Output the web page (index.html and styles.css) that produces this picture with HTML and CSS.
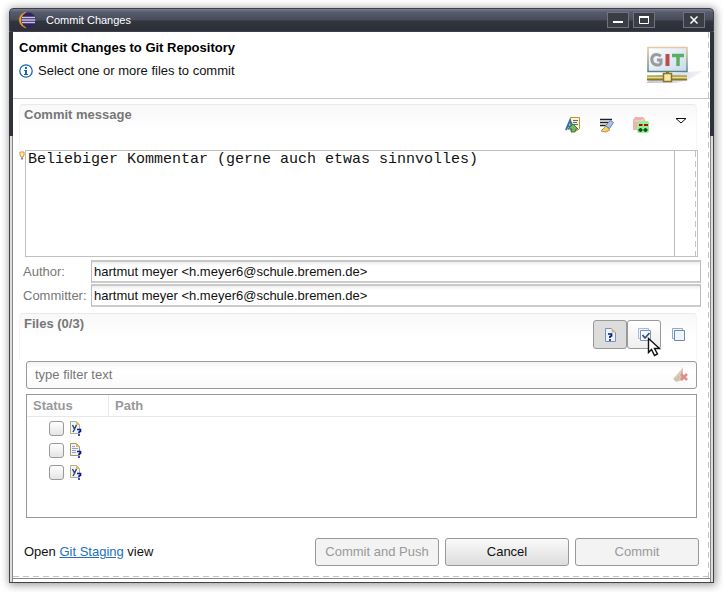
FILE: index.html
```html
<!DOCTYPE html>
<html lang="en">
<head>
<meta charset="utf-8">
<title>Commit Changes</title>
<link rel="stylesheet" href="styles.css">
</head>
<body>
<main class="window">
  <header class="titlebar">
    <svg class="logo" width="20" height="18" viewBox="0 0 20 18"><path d="M8 1C-1 4-1 14 8 17C3 12 3 6 8 1Z" fill="#f3a01f" stroke="#f3a01f" stroke-width=".5"/><circle cx="10.500" cy="9" r="7.500" fill="#2f2460"/><path d="M4 6.500h13M3.500 9h14M4 11.500h13" stroke="#c9c3e4" stroke-width="1.500"/></svg>
    <span class="caption">Commit Changes</span>
    <button class="win-btn" aria-label="Minimize"><svg width="20" height="14" viewBox="0 0 20 14"><path d="M5 9h10" stroke="#fff" stroke-width="2"/></svg></button>
    <button class="win-btn" aria-label="Maximize"><svg width="20" height="14" viewBox="0 0 20 14"><path d="M5 4h10" stroke="#fff" stroke-width="2"/><path d="M5.500 3.500h9v7h-9z" fill="none" stroke="#fff"/></svg></button>
    <button class="win-btn close" aria-label="Close"><svg width="20" height="14" viewBox="0 0 20 14"><path d="M6.500 3.500l7 7m0-7l-7 7" stroke="#fff" stroke-width="1.500"/></svg></button>
  </header>
  <div class="frame">
  <div class="content">
    <section class="intro">
      <div class="intro-text">
        <h1>Commit Changes to Git Repository</h1>
        <p class="hint"><svg width="14" height="14" viewBox="0 0 14 14"><circle cx="7" cy="7" r="6.200" fill="#fff" stroke="#1b64ac" stroke-width="1.300"/><path d="M6 3h2v2H6zM5 6h3v4h1v1H5v-1h1V7H5z" fill="#1b64ac"/></svg>Select one or more files to commit</p>
      </div>
      <svg class="git" width="58" height="38" viewBox="0 0 58 38"><defs><linearGradient id="g" x2="1" y2="1"><stop stop-color="#fff"/><stop offset="1" stop-color="#c6d9ee"/></linearGradient><linearGradient id="b" x2="0" y2="1"><stop stop-color="#ecc69b"/><stop offset="1" stop-color="#53877f"/></linearGradient><linearGradient id="s" x2="1" y2="0"><stop stop-color="#c9c2d6"/><stop offset="1" stop-color="#f4f2f7"/></linearGradient></defs><path d="M0 37L8 30L40 26L57 25L42 34L30 37Z" fill="url(#s)"/><path d="M2 1.500h39v24H2z" fill="url(#g)" stroke="url(#b)" stroke-width="1.500"/><path d="M15 10C8 6 5 11 6 15C7 20 15 20 15 17v-3h-4" fill="none" stroke="#9b9b9b" stroke-width="3"/><path d="M21.500 8v12" stroke="#bd4a50" stroke-width="4"/><path d="M26 9.500h12M32 9v11" stroke="#5dae62" stroke-width="3.500"/><path d="M1 32h40" stroke="#857a24" stroke-width="5"/><path d="M1 31.500h40" stroke="#e9dc86" stroke-width="2"/><path d="M21.500 25v3" stroke="#857430" stroke-width="3"/><path d="M17.500 27.500h8v8h-8z" fill="#f6e9a8" stroke="#857430" stroke-width="1.500"/></svg>
    </section>

    <section class="section message">
      <div class="section-head">
        <h2>Commit message</h2>
        <div class="tools">
          <button class="tool" aria-label="Amend"><svg width="16" height="16" viewBox="0 0 16 16"><path d="M5.500 .5h9v11l-2 2h-7z" fill="#fff3bd" stroke="#b59645"/><path d="M8 3.500h5M8 5.500h4M9 7.500h4" stroke="#4c6f9c"/><path d="M1 13L5 3.500l3 7M3 9.500h4" stroke="#3573a2" stroke-width="2" fill="none"/><path d="M3 12l5-5 5 5h-2l-1 3H6l1-3z" fill="#7fb567" stroke="#37783b"/></svg></button>
          <button class="tool" aria-label="Sign off"><svg width="16" height="16" viewBox="0 0 16 16"><path d="M1 2.500h12M1 5.500h9M1 8.500h6" stroke="#222" stroke-width="1.300"/><path d="M2 14l5-5 4 4-4 2z" fill="#f2d071" stroke="#c89434"/><path d="M6.500 8.500l5-5 3 2-4 6z" fill="#a9c2e5" stroke="#5f82b7"/></svg></button>
          <button class="tool" aria-label="Change id"><svg width="16" height="16" viewBox="0 0 16 16"><path d="M0 3l2-3h8l2 2v8l-3 3H0z" fill="#f2b0ae"/><path d="M2 4h7l2-2M9 4v7" fill="none" stroke="#f9cfcd" stroke-width="1.500"/><rect x="4" y="4" width="12" height="12" rx="2" fill="#98ed97"/><path d="M6 8h3.500M11 8h4" stroke="#a21515" stroke-width="2"/><path d="M7.500 11v4M5.500 13h4M12.500 11v4M10.500 13h4" stroke="#09571a" stroke-width="2"/></svg></button>
          <button class="tool menu" aria-label="Menu"><svg width="16" height="16" viewBox="0 0 16 16"><path d="M3 4.500h10L8 9z" fill="#fff" stroke="#111"/></svg></button>
        </div>
      </div>
      <div class="editor">
        <svg class="bulb" width="6" height="10" viewBox="0 0 6 10"><path d="M1 1h4v3L4 6H2L1 4z" fill="#fff1ba" stroke="#ed8d24"/><path d="M2 7.500h2" stroke="#6d86a7" stroke-width="2"/></svg>
        <textarea aria-label="Commit message">Beliebiger Kommentar (gerne auch etwas sinnvolles)</textarea>
        <div class="ruler"></div>
      </div>
      <div class="person"><label for="author">Author:</label><input id="author" value="hartmut meyer &lt;h.meyer6@schule.bremen.de&gt;"></div>
      <div class="person"><label for="committer">Committer:</label><input id="committer" value="hartmut meyer &lt;h.meyer6@schule.bremen.de&gt;"></div>
    </section>

    <section class="section files">
      <div class="section-head">
        <h2>Files (0/3)</h2>
        <div class="toggles">
          <button class="toggle pressed" aria-label="Show untracked files"><svg width="16" height="16" viewBox="0 0 16 16"><path d="M3.500 1.500h6l4 4v9h-10z" fill="#eaf2ff" stroke="#7890bd"/><path d="M9.500 1v4.500h4z" fill="#e4ba65"/><path d="M6 7h3.500v2L8 9.500V11M7 13h2" fill="none" stroke="#071984" stroke-width="1.700"/></svg></button>
          <button class="toggle hover" aria-label="Select all"><svg width="16" height="16" viewBox="0 0 16 16"><path d="M2.500 1.500h10v10h-10z" fill="#edf4fb" stroke="#a5bed8"/><path d="M4.500 3.500h10v10h-10z" fill="#f7fbff" stroke="#7896bb"/><path d="M6.500 8l2.500 3 4.500-5" fill="none" stroke="#355174" stroke-width="1.800"/></svg>
            <svg class="cursor" width="14" height="20" viewBox="0 0 14 20"><path d="M1.500 1.500v14l3-3 3 6 3-1.500-3-5.500h5z" fill="#fff" stroke="#111" stroke-width="1.400"/></svg></button>
          <button class="toggle" aria-label="Deselect all"><svg width="16" height="16" viewBox="0 0 16 16"><path d="M2.500 1.500h10v10h-10z" fill="#edf4fb" stroke="#91aac8"/><path d="M4.500 3.500h10v10h-10z" fill="#eff5fd" stroke="#7189b0"/></svg></button>
        </div>
      </div>
      <div class="filter"><input aria-label="Filter" placeholder="type filter text"><button aria-label="Clear filter"><svg width="16" height="16" viewBox="0 0 16 16"><path d="M11 0L8 4L1 12l3 3 7-2V4z" fill="#dacbb9"/><path d="M4 11l-1 2M7 9l-2 5M10 5l-1 8" stroke="#c4b49f"/><path d="M9 7l6 6m0-6l-6 6" stroke="#df8b8b" stroke-width="2.500"/></svg></button></div>
      <div class="list">
      <table>
        <thead><tr><th class="status">Status</th><th>Path</th></tr></thead>
        <tbody>
          <tr><td><div class="cell"><input type="checkbox" aria-label="File 1"><svg width="14" height="16" viewBox="0 0 14 16"><path d="M1.500 1.500h6l3 3v9h-9z" fill="#edf4ff" stroke="#b8ad82"/><path d="M7 1v4h4z" fill="#e2b868"/><path d="M3.500 5l2 4 2-4M6 8.500L4 12" fill="none" stroke="#314c70" stroke-width="1.500"/><path d="M8 9.500h3.500v2L10 12v1M9 15h2" fill="none" stroke="#0018a4" stroke-width="1.600"/></svg></div></td><td></td></tr>
          <tr><td><div class="cell"><input type="checkbox" aria-label="File 2"><svg width="14" height="16" viewBox="0 0 14 16"><path d="M1.500 1.500h6l3 3v9h-9z" fill="#edf4ff" stroke="#b49253"/><path d="M7 1v4h4z" fill="#e2b868"/><path d="M3 4.500h3M3 6.500h6M3 8.500h4M3 10.500h4" stroke="#8aa4ce"/><path d="M8 9.500h3.500v2L10 12v1M9 15h2" fill="none" stroke="#0018a4" stroke-width="1.600"/></svg></div></td><td></td></tr>
          <tr><td><div class="cell"><input type="checkbox" aria-label="File 3"><svg width="14" height="16" viewBox="0 0 14 16"><path d="M1.500 1.500h6l3 3v9h-9z" fill="#edf4ff" stroke="#b8ad82"/><path d="M7 1v4h4z" fill="#e2b868"/><path d="M3.500 5l2 4 2-4M6 8.500L4 12" fill="none" stroke="#314c70" stroke-width="1.500"/><path d="M8 9.500h3.500v2L10 12v1M9 15h2" fill="none" stroke="#0018a4" stroke-width="1.600"/></svg></div></td><td></td></tr>
        </tbody>
      </table>
      </div>
    </section>

    <footer class="actions">
      <p>Open <a href="#">Git Staging</a> view</p>
      <button class="action" disabled>Commit and Push</button>
      <button class="action">Cancel</button>
      <button class="action" disabled>Commit</button>
    </footer>
  </div>
  </div>
</main>
</body>
</html>
```
FILE: styles.css
```css
* { box-sizing: border-box; }
body { margin: 0; padding: 8px 9px 9px; min-height: 100vh; display: flex; background: #fff; font: 13px/16px "Liberation Sans", Arial, sans-serif; color: #111; }
h1, h2, p { margin: 0; }
button, input, textarea { font: inherit; color: inherit; margin: 0; padding: 0; }
svg { display: block; flex: none; }
.window { flex: 1; display: flex; flex-direction: column; border-radius: 4px 4px 0 0; box-shadow: 1px 1px 8px 1px #999; }
.titlebar { height: 24px; display: flex; align-items: center; padding: 0 8px; border: 1px solid #3e3f4b; border-radius: 4px 4px 0 0; background: linear-gradient(#7c7e91 0, #585b6c 3px, #484b5a 11px, #33353e 12px, #2d2f38); color: #fff; font-size: 11px; }
.caption { flex: 1; margin-left: 8px; }
.win-btn { width: 22px; height: 16px; border: 1px solid #71737d; background: #3b3d46; margin-left: 4px; }
.win-btn.close { margin-left: 28px; }
.frame { flex: 1; display: flex; padding: 0 4px 4px; background: linear-gradient(#30323b 104px, transparent 104px), linear-gradient(90deg, #444 1px, #ddd 1px 3px, #888 3px 4px, #fff 4px calc(100% - 4px), #888 calc(100% - 4px) calc(100% - 3px), #ddd calc(100% - 3px) calc(100% - 1px), #444 calc(100% - 1px)); border-bottom: 1px solid #444; }
.content { flex: 1; display: flex; flex-direction: column; background: repeating-linear-gradient(#c4c4c4 0 6px, #fff 6px 10px) right 1px top / 1px 100% no-repeat, repeating-linear-gradient(90deg, #c4c4c4 0 6px, #fff 6px 10px) bottom 1px left / 100% 1px no-repeat, #fff; box-shadow: 0 1px #888; }
.intro { height: 67px; display: flex; justify-content: space-between; padding: 8px 6px 0 6px; border-bottom: 1px solid #c8c8c8; }
.intro h1 { font-size: 13px; line-height: 16px; color: #000; }
.hint { display: flex; align-items: center; gap: 5px; margin-top: 7px; }
.git { margin-top: 6px; }
.section { padding: 0 9px 0 6px; }
.section-head { display: flex; justify-content: space-between; margin-right: 4px; padding: 2px 0 0 4px; border-top: 1px solid #e9e9e9; border-left: 1px solid #f5f5f5; border-right: 1px solid #f5f5f5; border-radius: 4px 4px 0 0; background: linear-gradient(#f8f8f8, #fff 24px); }
.section-head h2 { font-size: 13px; line-height: 16px; color: #777; }
.message { margin-top: 5px; }
.message .section-head { height: 46px; }
.tools { display: flex; gap: 18px; padding: 10px 7px 0 0; }
.tool { width: 16px; height: 16px; border: 0; background: none; }
.tool.menu { margin-left: 6px; margin-top: -3px; }
.editor { display: flex; margin-right: 3px; }
.editor textarea { flex: 1; min-width: 0; height: 107px; border: 1px solid #c0c0c0; border-right: 0; padding: 0 2px; resize: none; outline: 0; font: 15px/17px "Liberation Mono", monospace; }
.ruler { width: 24px; border: solid #c0c0c0; border-width: 1px 1px 1px 0; background: linear-gradient(#bbb, #bbb) 0 0 / 1px 100% no-repeat, repeating-linear-gradient(#c4c4c4 0 6px, #fff 6px 10px) right 1px top / 1px 100% no-repeat; }
.bulb { margin-top: 1px; }
.person { display: flex; align-items: center; margin: 3px 0 0 4px; color: #777; }
.person + .person { margin-top: 1px; }
.person label { width: 68px; }
.person input { flex: 1; height: 23px; border: 1px solid #bbb; border-top: 2px solid #c8c8c8; border-bottom: 2px solid #ccc; background: linear-gradient(#eee, #fff 4px); color: #111; padding: 0 2px; }
.files { display: flex; flex-direction: column; flex: 1; margin-top: 6px; }
.files .section-head { height: 48px; }
.toggles { display: flex; padding: 4px 1px 0 0; }
.toggle { position: relative; width: 34px; height: 29px; display: grid; place-items: center; border: 1px solid transparent; border-radius: 3px; background: none; }
.toggle.pressed { background: #dcdcdc; border-color: #999; }
.toggle.hover { background: linear-gradient(#fff, #eee); border-color: #999; }
.cursor { position: absolute; left: 19px; top: 16px; z-index: 1; }
.filter { display: flex; align-items: center; height: 28px; margin: 0 4px 0 7px; padding: 0 8px; border: 1px solid #999; border-radius: 3px; background: linear-gradient(#f4f4f4, #fff 8px, #fafafa); }
.filter input { flex: 1; border: 0; outline: 0; background: none; }
.filter input::placeholder { color: #777; opacity: 1; }
.filter button { border: 0; background: none; }
.list { flex: 1; min-height: 90px; margin: 5px 4px 0 7px; border: 1px solid #999; }
table { width: 100%; border-spacing: 0; }
th { height: 22px; padding: 0 6px; text-align: left; color: #999; border-bottom: 1px solid #e8e8e8; }
th.status { width: 82px; border-right: 1px solid #e8e8e8; }
td { height: 22px; padding: 0; }
.cell { display: flex; align-items: center; gap: 5px; padding-left: 22px; }
.cell input { appearance: none; width: 15px; height: 15px; border: 1px solid #999; border-radius: 3px; background: linear-gradient(#fff, #e4e4e4); }
.actions { display: flex; align-items: center; gap: 6px; padding: 20px 11px 12px 11px; }
.actions p { flex: 1; }
.actions a { color: #2470c0; }
.action { width: 124px; height: 28px; border: 1px solid #999; border-radius: 3px; background: linear-gradient(#fafafa, #ddd); }
.action:disabled { background: #f3f3f3; color: #999; }
```
